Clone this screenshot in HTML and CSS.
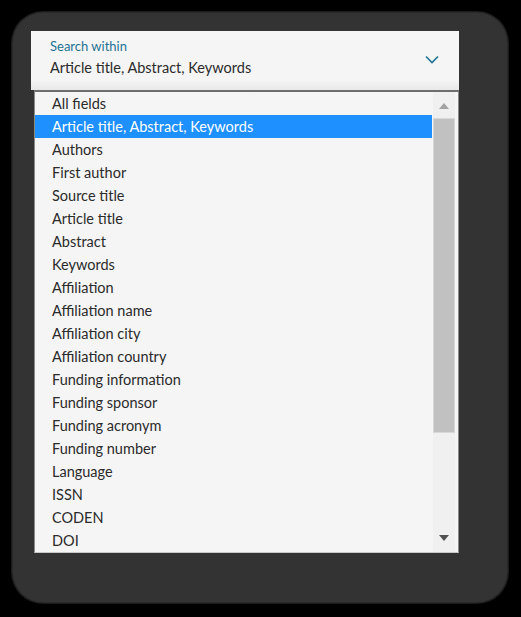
FILE: index.html
```html
<!DOCTYPE html>
<html>
<head>
<meta charset="utf-8">
<link rel="stylesheet" href="styles.css">
</head>
<body>
<div class="frame">
  <div class="panel">
    <div class="header">
      <div class="header-text">
        <div class="label">Search within</div>
        <div class="value">Article title, Abstract, Keywords</div>
      </div>
      <svg class="chevron" width="14" height="9" viewBox="0 0 14 9"><path d="M1 1.5 L7 7.5 L13 1.5" fill="none" stroke="#1f7294" stroke-width="1.6"/></svg>
    </div>
    <div class="listbox">
      <ul class="options">
        <li>All fields</li>
        <li class="selected">Article title, Abstract, Keywords</li>
        <li>Authors</li>
        <li>First author</li>
        <li>Source title</li>
        <li>Article title</li>
        <li>Abstract</li>
        <li>Keywords</li>
        <li>Affiliation</li>
        <li>Affiliation name</li>
        <li>Affiliation city</li>
        <li>Affiliation country</li>
        <li>Funding information</li>
        <li>Funding sponsor</li>
        <li>Funding acronym</li>
        <li>Funding number</li>
        <li>Language</li>
        <li>ISSN</li>
        <li>CODEN</li>
        <li>DOI</li>
      </ul>
      <div class="scrollbar">
        <div class="arrow up"></div>
        <div class="track"><div class="thumb"></div></div>
        <div class="arrow down"></div>
      </div>
    </div>
  </div>
</div>
</body>
</html>
```
FILE: styles.css
```css
html, body {
  margin: 0;
  padding: 0;
  background: #000;
}
body {
  width: 521px;
  height: 617px;
  padding: 13px 0 0 13px;
  box-sizing: border-box;
  font-family: Lato, "Open Sans", sans-serif;
}
.frame {
  width: 494px;
  height: 589px;
  box-sizing: border-box;
  background: #333;
  border-radius: 30px;
  padding: 18px 0 0 18px;
  box-shadow: 0 0 0 1px #2a2a2a, 0 0 0 2px #1a1a1a;
}
.panel {
  width: 428px;
  display: flex;
  flex-direction: column;
}
.header {
  height: 59px;
  box-sizing: border-box;
  background: linear-gradient(#f5f5f5 0, #f5f5f5 49px, #e8e8e8 59px);
  display: flex;
  align-items: center;
  padding: 0 19px 0 19px;
  justify-content: space-between;
}
.header-text {
  display: flex;
  flex-direction: column;
  gap: 5px;
  margin-top: -7px;
}
.label {
  font-size: 13px;
  color: #1f7294;
  line-height: 16px;
}
.value {
  font-size: 14.5px;
  color: #2b2b2b;
  line-height: 18px;
}
.chevron {
  margin-top: -2px;
  margin-right: 1px;
}
.listbox {
  margin-left: 3px;
  height: 463px;
  box-sizing: border-box;
  border-top: 2px solid #6e6e6e;
  border-left: 1px solid #8a8a8a;
  border-right: 1px solid #8a8a8a;
  border-bottom: 1px solid #c8c8c8;
  background: #f5f5f5;
  display: flex;
}
.options {
  list-style: none;
  margin: 0;
  padding: 0;
  width: 397px;
}
.options li {
  height: 23px;
  line-height: 23px;
  padding-left: 17px;
  font-size: 14.5px;
  color: #2b2b2b;
}
.options li.selected {
  background: #1e90ff;
  color: #fff;
}
.scrollbar {
  width: 22px;
  margin-left: 1px;
  display: flex;
  flex-direction: column;
  background: #f0f0f0;
}
.arrow {
  height: 26px;
  display: flex;
  align-items: center;
  justify-content: center;
}
.arrow::before {
  content: "";
  width: 0;
  height: 0;
  border-left: 5.5px solid transparent;
  border-right: 5.5px solid transparent;
}
.arrow.up::before {
  border-bottom: 6px solid #a3a3a3;
  margin-top: 1px;
}
.arrow.down::before {
  border-top: 6px solid #505050;
  margin-bottom: 3px;
}
.track {
  flex: 1;
  display: flex;
  flex-direction: column;
}
.thumb {
  height: 315px;
  background: #c1c1c1;
  border: 1px solid #d8d8d8;
  box-sizing: border-box;
}
```
